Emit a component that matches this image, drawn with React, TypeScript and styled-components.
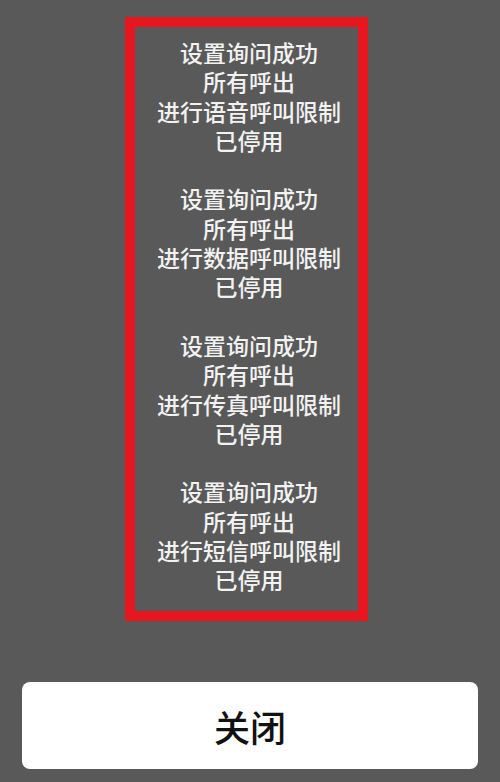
import styled, { createGlobalStyle } from "styled-components";

const GlobalStyle = createGlobalStyle`
  html, body {
    margin: 0;
    padding: 0;
    background: #595959;
  }
  body {
    font-family: "Noto Sans CJK SC", "Noto Sans", sans-serif;
  }
`;

const groups = [
  ["设置询问成功", "所有呼出", "进行语音呼叫限制", "已停用"],
  ["设置询问成功", "所有呼出", "进行数据呼叫限制", "已停用"],
  ["设置询问成功", "所有呼出", "进行传真呼叫限制", "已停用"],
  ["设置询问成功", "所有呼出", "进行短信呼叫限制", "已停用"],
];

const App = () => {
  return (
    <Page>
      <GlobalStyle />
      <BoxRow>
        <ResultBox>
          {groups.map((lines, i) => (
            <Group key={i}>
              {lines.map((line, j) => (
                <Line key={j}>{line}</Line>
              ))}
            </Group>
          ))}
        </ResultBox>
      </BoxRow>
      <CloseButton>关闭</CloseButton>
    </Page>
  );
};

export default App;

const Page = styled.div`
  width: 500px;
  height: 782px;
  background: #595959;
  display: flex;
  flex-direction: column;
  box-sizing: border-box;
  padding-top: 17px;
  overflow: hidden;
`;

const BoxRow = styled.div`
  display: flex;
  padding-left: 125px;
`;

const ResultBox = styled.div`
  width: 243px;
  height: 604px;
  box-sizing: border-box;
  border: 10px solid #e8161f;
  padding: 11px 0 0 5px;
  display: flex;
  flex-direction: column;
  gap: 29.3px;
`;

const Group = styled.div`
  display: flex;
  flex-direction: column;
  align-items: center;
`;

const Line = styled.div`
  color: #f2f2f2;
  font-size: 23px;
  font-weight: 500;
  line-height: 29.3px;
  height: 29.3px;
  white-space: nowrap;
`;

const CloseButton = styled.div`
  margin: 61px 22px 0;
  height: 87px;
  background: #ffffff;
  border-radius: 8px;
  display: flex;
  align-items: center;
  justify-content: center;
  color: #111111;
  font-size: 36px;
  font-weight: 500;
`;
